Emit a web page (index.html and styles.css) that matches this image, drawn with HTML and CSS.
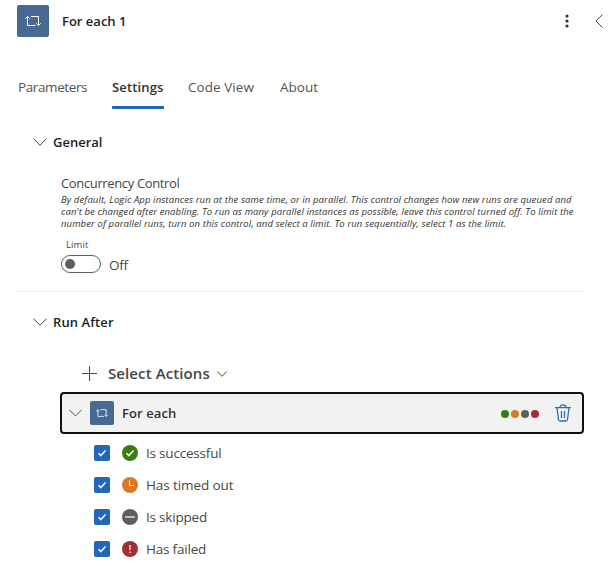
FILE: index.html
```
<!DOCTYPE html>
<html lang="en">
<head>
<meta charset="utf-8">
<title>For each 1</title>
<link rel="stylesheet" href="styles.css">
</head>
<body>
<svg class="defs" aria-hidden="true">
  <symbol id="loop" viewBox="0 0 32 32"><path d="M14 11.500h7.500v9M18.500 20.500h-8v-9M8.300 13.700l2.200-2.200 2.200 2.200M19.300 18.300l2.200 2.200 2.200-2.200"/></symbol>
  <symbol id="chevron" viewBox="0 0 14 8"><path d="M.5.7 7 7.200 13.500.7"/></symbol>
  <symbol id="check" viewBox="0 0 16 16"><path d="m4.500 8.200 2.300 2.400 4.700-5"/></symbol>
</svg>
<main class="panel">
  <header class="header">
    <span class="tile"><svg><use href="#loop"/></svg></span>
    <h1 class="title">For each 1</h1>
    <svg class="more" viewBox="0 0 4 16"><circle cx="2" cy="3" r="1.600"/><circle cx="2" cy="8" r="1.600"/><circle cx="2" cy="13" r="1.600"/></svg>
    <svg class="collapse" viewBox="0 0 8 14"><path d="M7.500.5 1 7l6.500 6.500"/></svg>
  </header>
  <nav class="tabs">
    <a class="tab parameters">Parameters</a>
    <a class="tab active">Settings</a>
    <a class="tab code">Code View</a>
    <a class="tab about">About</a>
  </nav>
  <section class="general">
    <div class="section-head"><svg class="chevron"><use href="#chevron"/></svg><h2 class="general-title">General</h2></div>
    <div class="setting">
      <div class="setting-name">Concurrency Control</div>
      <p class="description"><span class="line1">By default, Logic App instances run at the same time, or in parallel. This control changes how new runs are queued and</span><br><span class="line2">can't be changed after enabling. To run as many parallel instances as possible, leave this control turned off. To limit the</span><br><span class="line3">number of parallel runs, turn on this control, and select a limit. To run sequentially, select 1 as the limit.</span></p>
      <div class="limit">Limit</div>
      <div class="toggle-row"><span class="toggle"></span><span class="off">Off</span></div>
    </div>
  </section>
  <section class="run-after">
    <div class="section-head"><svg class="chevron"><use href="#chevron"/></svg><h2 class="run-title">Run After</h2></div>
    <div class="select">
      <svg class="plus" viewBox="0 0 15 15"><path d="M7.500 0v15M0 7.500h15"/></svg>
      <span class="select-label">Select Actions</span>
      <svg class="chevron small"><use href="#chevron"/></svg>
    </div>
    <div class="card">
      <svg class="chevron card-chevron"><use href="#chevron"/></svg>
      <span class="tile tile-small"><svg><use href="#loop"/></svg></span>
      <span class="card-title">For each</span>
      <span class="dots"><i class="green"></i><i class="orange"></i><i class="gray"></i><i class="red"></i></span>
      <svg class="trash" viewBox="0 0 16 18"><path d="M0 3.700h16M5 3.500C5 .1 11 .1 11 3.500M2 4l1.500 11.500q.2 1.500 1.700 1.500h5.600q1.500 0 1.700-1.500L14 4M6.500 7v7M9.500 7v7"/></svg>
    </div>
    <ul class="statuses">
      <li><span class="box"><svg><use href="#check"/></svg></span><span class="status green"><svg><use href="#check"/></svg></span><span class="successful">Is successful</span></li>
      <li><span class="box"><svg><use href="#check"/></svg></span><span class="status orange"><svg class="thin" viewBox="0 0 16 16"><path d="M7.500 3.500v5H12"/></svg></span><span class="timed">Has timed out</span></li>
      <li><span class="box"><svg><use href="#check"/></svg></span><span class="status gray"><svg class="soft" viewBox="0 0 16 16"><path d="M3 8h10"/></svg></span><span class="skipped">Is skipped</span></li>
      <li><span class="box"><svg><use href="#check"/></svg></span><span class="status red"><svg class="soft" viewBox="0 0 16 16"><path d="M8 4v5M8 10.500V12"/></svg></span><span class="failed">Has failed</span></li>
    </ul>
  </section>
</main>
</body>
</html>
```
FILE: styles.css
```
* { box-sizing: border-box; }
body { margin: 0; background: #fff; color: #484644; font: 13.5px/20px "Open Sans", "Noto Sans", sans-serif; overflow: hidden; }
h1, h2, p, ul { margin: 0; padding: 0; }
h1, h2 { font-size: 13px; font-weight: 600; line-height: 20px; }
svg { display: block; fill: none; stroke: currentColor; flex: none; }
span, a, h1, h2, div { white-space: nowrap; }
.defs { display: none; }
.panel { display: flow-root; width: 609px; height: 570px; overflow: hidden; }
.header { display: flex; align-items: center; height: 32px; margin-top: 5px; padding-left: 17px; }
.tile { width: 32px; height: 32px; border-radius: 2px; background: #486991; color: #fff; flex: none; }
.tile svg { width: 100%; height: 100%; }
.title { margin-left: 13px; color: #201f1e; }
.more { width: 4px; height: 16px; margin-left: auto; margin-right: 26px; fill: #323130; stroke: none; }
.collapse { width: 8px; height: 14px; margin-right: 6px; }
.tabs { display: flex; height: 32px; margin: 40px 0 0 18px; }
.tab { height: 32px; margin-right: 25px; color: #555351; }
.parameters { width: 69px; letter-spacing: -.4px; }
.tab.active { width: 52px; color: #323130; font-size: 13px; font-weight: 600; letter-spacing: .15px; border-bottom: 3px solid #2266bb; border-radius: 0 0 1px 1px; }
.code { width: 67px; margin-left: -1px; }
.tab.code { letter-spacing: .05px; }
.general { margin: 23px 26px 0 17px; height: 160px; border-bottom: 1px solid #f0efee; }
.section-head { display: flex; align-items: center; height: 20px; color: #201f1e; }
.run-title { letter-spacing: .1px; }
.chevron { width: 14px; height: 8px; color: #484644; }
.general .chevron { margin-left: 16px; }
.run-after .section-head .chevron { margin-left: 33px; }
.section-head h2 { margin-left: 6px; }
.setting { margin: 21px 0 0 44px; }
.setting-name { font-size: 13px; letter-spacing: -.36px; }
.description { margin-top: 1px; color: #323130; font-size: 9.5px; font-style: italic; line-height: 12px; letter-spacing: .11px; }
.limit { margin: 8px 0 0 5px; font-size: 9.5px; line-height: 14px; letter-spacing: .1px; }
.toggle-row { display: flex; align-items: center; margin-top: 3px; height: 18px; }
.toggle { width: 40px; height: 18px; border: 1px solid #605e5c; border-radius: 9px; padding: 3px; }
.toggle::before { content: ""; display: block; width: 10px; height: 10px; border-radius: 50%; background: #605e5c; }
.off { margin: 2px 0 0 8px; letter-spacing: -.3px; }
.run-after { margin-top: 20px; }
.select { display: flex; align-items: center; height: 24px; margin: 29px 0 0 82px; color: #484644; font-size: 15px; font-weight: 600; letter-spacing: .1px; }
.plus { width: 15px; height: 15px; }
.select-label { margin-left: 11px; width: 102px; }
.small { width: 10px; height: 6px; margin-left: 7px; margin-top: 2px; stroke-width: 1.4; }
.card { display: flex; align-items: center; width: 524px; height: 42px; margin: 7px 0 0 60px; padding-left: 7px; background: #f3f2f2; border: 2px solid #111; border-radius: 4px; }
.card-chevron { width: 13px; }
.tile-small { width: 24px; height: 24px; margin-left: 8px; color: #dfe8f2; }
.tile-small svg { stroke-width: 1.3; }
.card-title { margin-left: 8px; color: #323130; font-size: 13px; font-weight: 600; letter-spacing: .1px; }
.dots { display: flex; gap: 2px; margin-left: auto; margin-top: 1px; }
.dots i { width: 8px; height: 8px; border-radius: 50%; }
.trash { width: 16px; height: 18px; margin: 0 11px 0 16px; stroke: #2670c0; stroke-width: 1.3; }
.green { background: #3a7d14; }
.orange { background: #db7922; }
.gray { background: #605e5c; }
.red { background: #a42e32; }
.statuses { list-style: none; margin: 3px 0 0 94px; }
.statuses li { display: flex; align-items: center; height: 32px; }
.box, .status { width: 16px; height: 16px; border-radius: 2px; background-color: #2266bb; color: #fff; flex: none; }
.box svg, .status svg { width: 16px; height: 16px; stroke-width: 1.5; }
.status .thin { stroke-width: 1; }
.status .soft { color: #e3dedd; }
.status { border-radius: 50%; margin: 0 8px 0 12px; }
.status.green { background: #3a7d14; }
.status.orange { background: #db7922; }
.status.gray { background: #605e5c; }
.status.red { background: #a42e32; }
.successful, .failed, .skipped { letter-spacing: -.2px; }
.timed { letter-spacing: -.1px; }
```
